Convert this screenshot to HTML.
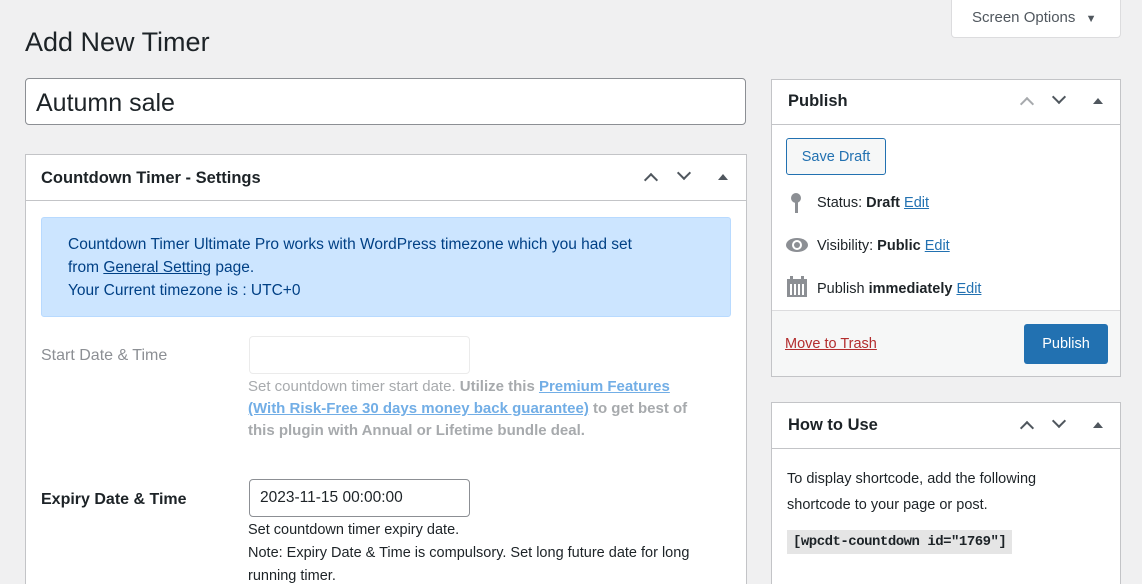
<!DOCTYPE html>
<html><head><meta charset="utf-8"><style>
*{box-sizing:border-box;margin:0;padding:0}
html,body{width:1142px;height:584px;overflow:hidden}
body{background:#f0f0f1;font-family:"Liberation Sans",sans-serif;color:#1d2327;position:relative;font-size:14px}
.abs{position:absolute}
a{color:#2271b1;text-decoration:underline}
.box{position:absolute;background:#fff;border:1px solid #c3c4c7}
.hd{position:absolute;left:0;right:0;top:0;border-bottom:1px solid #c3c4c7}
.arr{position:absolute;width:10px;height:10px;border-left:2px solid #50575e;border-top:2px solid #50575e}
.tri{position:absolute;width:0;height:0;border-left:5px solid transparent;border-right:5px solid transparent;border-bottom:6px solid #50575e}
</style></head><body>
<div class="abs" style="left:951px;top:0;width:170px;height:38px;background:#fff;border:1px solid #dcdcde;border-top:none;border-radius:0 0 4px 4px;color:#50575e;font-size:15px;line-height:36px;padding-left:20px">Screen Options <span style="font-size:11px;margin-left:6px">▼</span></div>
<div class="abs" style="left:25px;top:27px;font-size:27px;font-weight:400">Add New Timer</div>
<div class="abs" style="left:25px;top:78px;width:721px;height:47px;background:#fff;border:1px solid #8c8f94;border-radius:4px;font-size:25px;padding:10px 10px;line-height:28px">Autumn sale</div>

<div class="box" style="left:25px;top:154px;width:722px;height:440px">
 <div class="hd" style="height:46px"><div class="abs" style="left:15px;top:14px;font-size:16.5px;font-weight:bold">Countdown Timer - Settings</div>
  <div class="arr" style="left:620px;top:20px;transform:rotate(45deg)"></div>
  <div class="arr" style="left:653px;top:13px;transform:rotate(225deg)"></div>
  <div class="tri" style="left:692px;top:19px"></div></div>
 <div class="abs" style="left:15px;top:62px;width:690px;height:100px;background:#cce5ff;border:1px solid #b8daff;border-radius:3px;color:#004085;font-size:15.5px;line-height:23px;padding:15px 26px">Countdown Timer Ultimate Pro works with WordPress timezone which you had set<br>from <a style="color:#004085" href="#">General Setting</a> page.<br>Your Current timezone is : UTC+0</div>
 <div class="abs" style="left:15px;top:192px;color:#8c8f94;font-size:16px">Start Date &amp; Time</div>
 <div class="abs" style="left:223px;top:181px;width:221px;height:38px;border:1px solid #ebebeb;border-radius:4px"></div>
 <div class="abs" style="left:222px;top:221px;width:452px;color:#a7aaad;font-size:15px;line-height:22px">Set countdown timer start date. <b>Utilize this <a style="color:#72aee6" href="#">Premium Features (With Risk-Free 30 days money back guarantee)</a> to get best of this plugin with Annual or Lifetime bundle deal.</b></div>
 <div class="abs" style="left:15px;top:336px;font-size:16px;font-weight:bold">Expiry Date &amp; Time</div>
 <div class="abs" style="left:223px;top:324px;width:221px;height:38px;border:1px solid #8c8f94;border-radius:4px;font-size:15.5px;line-height:36px;padding-left:10px">2023-11-15 00:00:00</div>
 <div class="abs" style="left:222px;top:364px;width:450px;font-size:14.5px;line-height:23px">Set countdown timer expiry date.<br>Note: Expiry Date &amp; Time is compulsory. Set long future date for long running timer.</div>
</div>

<div class="box" style="left:771px;top:79px;width:350px;height:298px">
 <div class="hd" style="height:45px"><div class="abs" style="left:16px;top:12px;font-size:16.5px;font-weight:bold">Publish</div>
  <div class="arr" style="left:250px;top:19px;transform:rotate(45deg);border-color:#a7aaad"></div>
  <div class="arr" style="left:282px;top:12px;transform:rotate(225deg)"></div>
  <div class="tri" style="left:321px;top:18px"></div></div>
 <div class="abs" style="left:14px;top:58px;width:100px;height:37px;border:1px solid #2271b1;border-radius:3px;background:#f6f7f7;color:#2271b1;font-size:14.5px;line-height:37px;text-align:center">Save Draft</div>
 <svg class="abs" style="left:17px;top:112px" width="14" height="22"><circle cx="7" cy="6" r="5" fill="#8c8f94"/><rect x="6" y="9" width="3" height="12" fill="#8c8f94"/></svg>
 <div class="abs" style="left:45px;top:115px;font-size:14.5px">Status: <b>Draft</b> <a href="#">Edit</a></div>
 <svg class="abs" style="left:13px;top:157px" width="24" height="16"><ellipse cx="12" cy="8" rx="11" ry="7" fill="#8c8f94"/><circle cx="12" cy="8" r="5" fill="#fff"/><circle cx="12" cy="8" r="3" fill="#8c8f94"/></svg>
 <div class="abs" style="left:45px;top:158px;font-size:14.5px">Visibility: <b>Public</b> <a href="#">Edit</a></div>
 <svg class="abs" style="left:15px;top:196px" width="20" height="21"><rect x="0" y="3" width="20" height="18" fill="#8c8f94"/><rect x="3" y="8" width="14" height="11" fill="#fff"/><rect x="5" y="8" width="2" height="11" fill="#8c8f94"/><rect x="9" y="8" width="2" height="11" fill="#8c8f94"/><rect x="13" y="8" width="2" height="11" fill="#8c8f94"/><rect x="3" y="0" width="3" height="5" fill="#8c8f94"/><rect x="14" y="0" width="3" height="5" fill="#8c8f94"/></svg>
 <div class="abs" style="left:45px;top:201px;font-size:14.5px">Publish <b>immediately</b> <a href="#">Edit</a></div>
 <div class="abs" style="left:0;right:0;top:230px;bottom:0;background:#f6f7f7;border-top:1px solid #dcdcde"></div>
 <div class="abs" style="left:13px;top:256px;font-size:14.5px"><a style="color:#b32d2e" href="#">Move to Trash</a></div>
 <div class="abs" style="left:252px;top:244px;width:84px;height:40px;background:#2271b1;border-radius:3px;color:#fff;font-size:14.5px;line-height:40px;text-align:center">Publish</div>
</div>

<div class="box" style="left:771px;top:402px;width:350px;height:200px">
 <div class="hd" style="height:46px"><div class="abs" style="left:16px;top:13px;font-size:16.5px;font-weight:bold">How to Use</div>
  <div class="arr" style="left:250px;top:20px;transform:rotate(45deg)"></div>
  <div class="arr" style="left:282px;top:13px;transform:rotate(225deg)"></div>
  <div class="tri" style="left:321px;top:19px"></div></div>
 <div class="abs" style="left:15px;top:63px;width:290px;font-size:14.5px;line-height:26px">To display shortcode, add the following shortcode to your page or post.</div>
 <div class="abs" style="left:15px;top:127px;background:#e5e5e5;padding:4px 6px;font-size:14px;font-weight:bold;font-family:'Liberation Mono',monospace;letter-spacing:-0.5px">[wpcdt-countdown id="1769"]</div>
</div>
</body></html>
